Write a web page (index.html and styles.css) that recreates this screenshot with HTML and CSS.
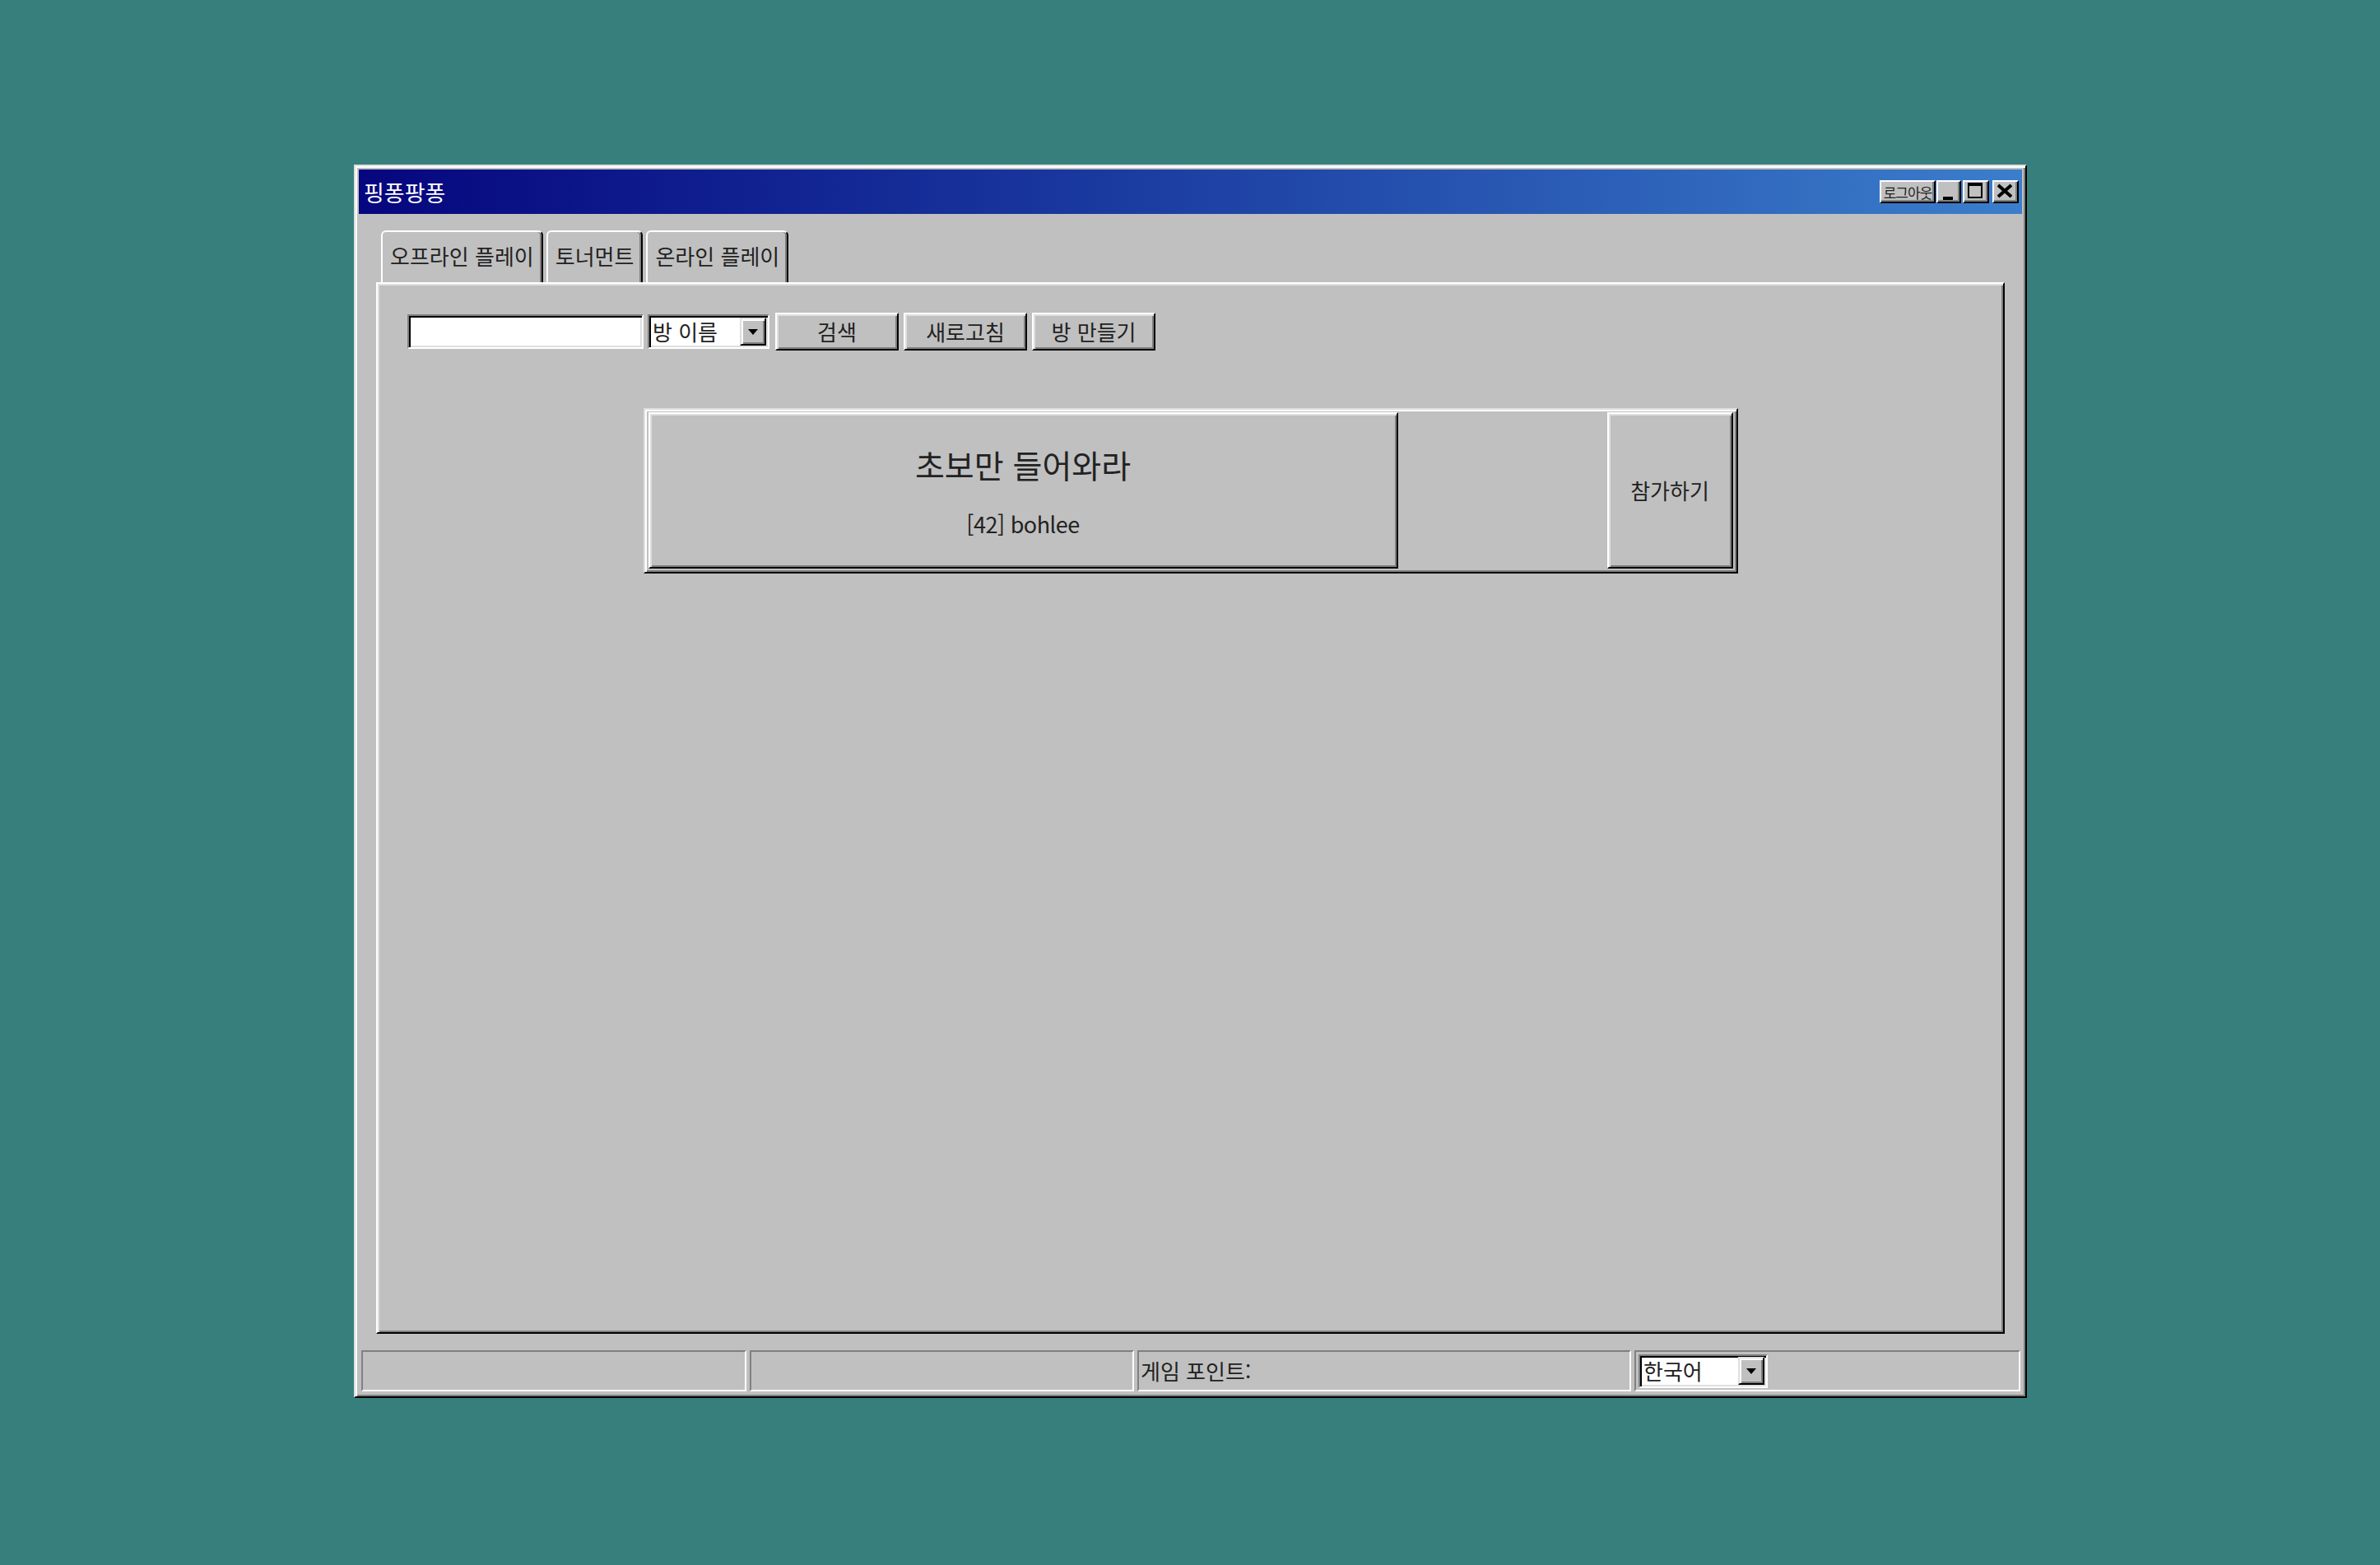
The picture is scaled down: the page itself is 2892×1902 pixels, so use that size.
FILE: index.html
```html
<!DOCTYPE html>
<html lang="ko">
<head>
<meta charset="utf-8">
<title>핑퐁팡퐁</title>
<link rel="stylesheet" href="styles.css">
</head>
<body>
<div class="window">
  <div class="titlebar">
    <span class="title">핑퐁팡퐁</span>
    <div class="controls">
      <div class="tbtn logout"><span>로그아웃</span></div>
      <div class="tbtn min"><svg viewBox="0 0 26 24" width="26" height="24"><rect x="6" y="18" width="12" height="4" fill="#000"/></svg></div>
      <div class="tbtn max"><svg viewBox="0 0 28 24" width="28" height="24"><path d="M4 1h18v19H4z M6 5v13h14V5z" fill="#000" fill-rule="evenodd"/></svg></div>
      <div class="tbtn close"><svg viewBox="0 0 28 24" width="28" height="24"><path d="M5 4L21 18M21 4L5 18" stroke="#000" stroke-width="4"/></svg></div>
    </div>
  </div>
  <div class="tabs">
    <div class="tab">오프라인 플레이</div>
    <div class="tab">토너먼트</div>
    <div class="tab">온라인 플레이</div>
  </div>
  <div class="panel">
    <div class="toolbar">
      <div class="field"></div>
      <div class="select">
        <span class="select-text">방 이름</span>
        <div class="drop"><svg viewBox="0 0 12 7" width="12" height="7"><polygon points="0,0 12,0 6,7" fill="#000"/></svg></div>
      </div>
      <div class="btn">검색</div>
      <div class="btn">새로고침</div>
      <div class="btn">방 만들기</div>
    </div>
    <div class="room">
      <div class="room-info">
        <div class="room-title">초보만 들어와라</div>
        <div class="room-host">[42] bohlee</div>
      </div>
      <div class="room-spacer"></div>
      <div class="join">참가하기</div>
    </div>
  </div>
  <div class="statusbar">
    <div class="sb sb1"></div>
    <div class="sb sb2"></div>
    <div class="sb sb3"><span>게임 포인트:</span></div>
    <div class="sb sb4">
      <div class="select lang">
        <span class="select-text">한국어</span>
        <div class="drop"><svg viewBox="0 0 12 7" width="12" height="7"><polygon points="0,0 12,0 6,7" fill="#000"/></svg></div>
      </div>
    </div>
  </div>
</div>
</body>
</html>
```

FILE: styles.css
```css
* { box-sizing: border-box; }

html, body {
  margin: 0;
  padding: 0;
}

body {
  background: #377f7d;
  width: 2892px;
  height: 1902px;
  overflow: hidden;
  font-family: "Noto Sans CJK KR", "Noto Sans", sans-serif;
  color: #222;
}

.window {
  margin: 200px 0 0 430px;
  width: 2033px;
  height: 1499px;
  background: #c0c0c0;
  border: 2px solid;
  border-color: #dfdfdf #000 #000 #dfdfdf;
  box-shadow: inset 2px 2px #fff, inset -2px -2px #808080;
  padding: 4px;
  display: flex;
  flex-direction: column;
}

.titlebar {
  height: 54px;
  flex: none;
  background: linear-gradient(90deg, #06067e 0%, #1a3aa0 45%, #3b7ecb 100%);
  display: flex;
  align-items: center;
  justify-content: space-between;
  padding: 0 4px 0 6px;
}

.title {
  color: #fff;
  font-size: 27px;
  line-height: 1;
}

.controls {
  display: flex;
  align-items: center;
}

.tbtn {
  height: 28px;
  background: #c0c0c0;
  border: 2px solid;
  border-color: #fff #000 #000 #fff;
  box-shadow: inset -2px -2px #808080;
  overflow: hidden;
}

.tbtn svg { display: block; }

.logout {
  width: 68px;
  display: flex;
  align-items: center;
  justify-content: center;
  font-size: 17px;
  line-height: 1;
  letter-spacing: -1px;
  color: #222;
  white-space: nowrap;
  padding: 0;
}

.min { width: 30px; margin-left: 1px; }
.max { width: 32px; margin-left: 2px; }
.close { width: 32px; margin-left: 4px; }

.tabs {
  margin: 20px 0 0 27px;
  height: 63px;
  flex: none;
  display: flex;
  gap: 4px;
}

.tab {
  height: 63px;
  padding: 0 9px 4px;
  border: 2px solid;
  border-bottom: none;
  border-color: #fff #000 transparent #fff;
  border-radius: 6px 6px 0 0;
  box-shadow: inset -2px 0 #808080;
  font-size: 26px;
  display: flex;
  align-items: center;
  white-space: nowrap;
}

.panel {
  margin: 0 21px 0 21px;
  height: 1278px;
  flex: none;
  border: 2px solid;
  border-color: #fff #000 #000 #fff;
  box-shadow: inset 2px 2px #dfdfdf, inset -2px -2px #808080;
  display: flex;
  flex-direction: column;
}

.toolbar {
  padding: 35px 0 0 36px;
  display: flex;
  align-items: center;
}

.field {
  width: 287px;
  height: 42px;
  background: #fff;
  border: 2px solid;
  border-color: #808080 #fff #fff #808080;
  box-shadow: inset 2px 2px #000, inset -2px -2px #dfdfdf;
}

.select {
  width: 148px;
  height: 42px;
  margin-left: 5px;
  background: #fff;
  border: 2px solid;
  border-color: #808080 #fff #fff #808080;
  box-shadow: inset 2px 2px #000, inset -2px -2px #dfdfdf;
  display: flex;
  align-items: center;
  justify-content: space-between;
  padding: 2px 2px 2px 4px;
  font-size: 26px;
  line-height: 1;
}

.select-text { white-space: nowrap; }

.drop {
  width: 32px;
  height: 34px;
  background: #c0c0c0;
  border: 2px solid;
  border-color: #dfdfdf #000 #000 #dfdfdf;
  box-shadow: inset 2px 2px #fff, inset -2px -2px #808080;
  display: flex;
  align-items: center;
  justify-content: center;
}

.drop svg { display: block; }

.btn {
  width: 150px;
  height: 46px;
  margin-left: 6px;
  border: 2px solid;
  border-color: #fff #000 #000 #fff;
  box-shadow: inset 2px 2px #dfdfdf, inset -2px -2px #808080;
  display: flex;
  align-items: center;
  justify-content: center;
  font-size: 26px;
  line-height: 1;
  white-space: nowrap;
}

.select + .btn { margin-left: 7px; }

.room {
  align-self: center;
  margin-top: 70px;
  width: 1330px;
  height: 201px;
  border: 2px solid;
  border-color: #dfdfdf #000 #000 #dfdfdf;
  box-shadow: inset 2px 2px #fff, inset -2px -2px #808080;
  padding: 3px 4px 4px 4px;
  display: flex;
}

.room-info {
  width: 911px;
  border: 2px solid;
  border-color: #fff #000 #000 #fff;
  box-shadow: inset 2px 2px #dfdfdf, inset -2px -2px #808080;
  display: flex;
  flex-direction: column;
  align-items: center;
  padding-top: 42px;
}

.room-title {
  font-size: 39px;
  line-height: 1;
}

.room-host {
  margin-top: 39px;
  font-size: 27px;
  line-height: 1;
  letter-spacing: -0.5px;
}

.room-spacer { flex: 1; }

.join {
  width: 153px;
  border: 2px solid;
  border-color: #fff #000 #000 #fff;
  box-shadow: inset 2px 2px #dfdfdf, inset -2px -2px #808080;
  display: flex;
  align-items: center;
  justify-content: center;
  font-size: 26px;
  line-height: 1;
  white-space: nowrap;
}

.statusbar {
  margin: 20px 0 0 3px;
  height: 50px;
  flex: none;
  display: flex;
  gap: 4px;
}

.sb {
  height: 50px;
  border: 2px solid;
  border-color: #808080 #fff #fff #808080;
  display: flex;
  align-items: center;
  font-size: 26px;
  line-height: 1;
  white-space: nowrap;
}

.sb1 { width: 468px; }
.sb2 { width: 467px; }
.sb3 { width: 600px; padding-left: 2px; }
.sb4 { width: 469px; padding-left: 3px; }

.select.lang {
  width: 157px;
  height: 41px;
  margin-left: 0;
}
```
